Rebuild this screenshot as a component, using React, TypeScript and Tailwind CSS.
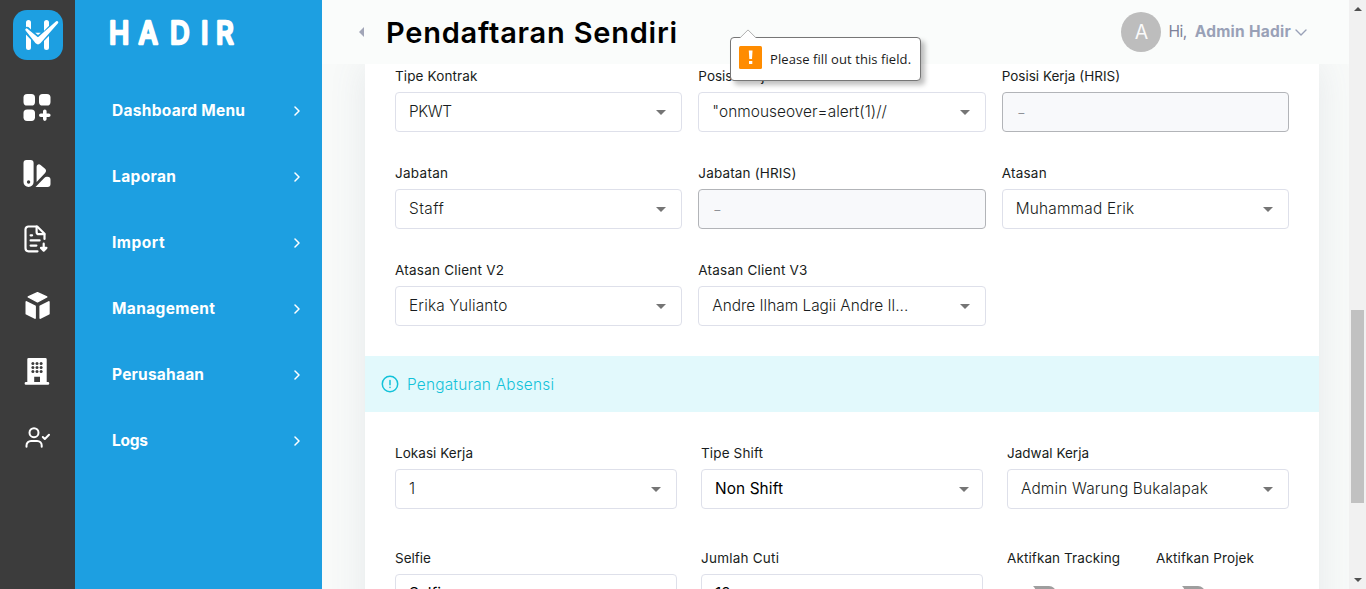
import type { ReactNode } from 'react';

type FieldProps = {
  label: string;
  labelClass?: string;
  value: string;
  valueClass?: string;
  disabled?: boolean;
  arrowClass?: string;
};

const menu = [
  { text: 'Dashboard Menu', cls: 'tracking-[0.284px]' },
  { text: 'Laporan', cls: 'tracking-[0.367px]' },
  { text: 'Import', cls: 'tracking-[0.5px]' },
  { text: 'Management', cls: 'tracking-[0.352px]' },
  { text: 'Perusahaan', cls: 'tracking-[0.212px]' },
  { text: 'Logs', cls: 'tracking-[-0.3px]' },
];

const employment: FieldProps[] = [
  { label: 'Tipe Kontrak', labelClass: 'tracking-[0.12px]', value: 'PKWT', valueClass: 'tracking-[-0.4px]' },
  { label: 'Posisi Kerja', value: '"onmouseover=alert(1)//', valueClass: 'tracking-[0.04px]' },
  { label: 'Posisi Kerja (HRIS)', value: '-', disabled: true },
  { label: 'Jabatan', labelClass: 'tracking-[0.28px]', value: 'Staff', valueClass: 'tracking-[0.45px]' },
  { label: 'Jabatan (HRIS)', labelClass: 'tracking-[0.156px]', value: '-', disabled: true },
  { label: 'Atasan', labelClass: 'tracking-[0.24px]', value: 'Muhammad Erik', valueClass: 'tracking-[0.22px]' },
  { label: 'Atasan Client V2', labelClass: 'tracking-[0.226px]', value: 'Erika Yulianto', valueClass: 'tracking-[0.15px]' },
  { label: 'Atasan Client V3', labelClass: 'tracking-[0.226px]', value: 'Andre Ilham Lagii Andre Il...', valueClass: 'tracking-[0px]' },
];

const attendance: FieldProps[] = [
  { label: 'Lokasi Kerja', labelClass: 'tracking-[0.05px]', value: '1' },
  { label: 'Tipe Shift', labelClass: 'tracking-[0.134px]', value: 'Non Shift', valueClass: 'font-normal text-black tracking-[0.1px]', arrowClass: '-mr-0.5' },
  { label: 'Jadwal Kerja', labelClass: 'tracking-[0.02px]', value: 'Admin Warung Bukalapak', valueClass: 'tracking-[0.16px]' },
];

function Label({ children, className = '' }: { children: ReactNode; className?: string }) {
  return (
    <div className={'mb-1.5 h-5 whitespace-nowrap text-[13.5px] leading-5 text-[#181c20] ' + className}>
      {children}
    </div>
  );
}

function Field({ label, labelClass, value, valueClass = '', disabled, arrowClass = '' }: FieldProps) {
  return (
    <div className="min-w-0">
      <Label className={labelClass}>{label}</Label>
      {disabled ? (
        <div className="flex h-10 items-center rounded-[4px] border border-[#b2b4b8] bg-[#f8f9fb] px-3.5 pt-px text-[15.4px] font-light text-[#8f9297]">
          <span className="inline-block origin-left scale-x-125">{value}</span>
        </div>
      ) : (
        <div className="flex h-10 items-center justify-between rounded-[4px] border border-[#dee0ea] bg-white pl-[13px] pr-[15px]">
          <span className={'whitespace-nowrap text-[15.4px] font-light text-[#181c20] ' + valueClass}>{value}</span>
          <svg width="10" height="5" viewBox="0 0 10 5" className={'mt-px shrink-0 fill-[#757575] ' + arrowClass}>
            <path d="M0 0h10L5 5z" />
          </svg>
        </div>
      )}
    </div>
  );
}

function Logo() {
  return (
    <svg width="50" height="50" viewBox="0 0 50 50" fill="none" strokeLinecap="round">
      <rect width="50" height="50" rx="14" fill="#1d9fe1" />
      <path d="M15.5 12.5v25M33.5 12.5v25" stroke="#fff" strokeWidth="5" />
      <path d="M14 20.5L25 32L44 12.7" stroke="#1d9fe1" strokeWidth="7" strokeLinejoin="round" />
      <path d="M13.600 19.700L25 29L44 12.300L26.400 32.400Q25 33.800 23.600 32.400z" fill="#fff" stroke="#fff" strokeWidth="2.600" strokeLinejoin="round" />
      <path d="M22.200 22.800h5.600l-2.800 2.200z" fill="#fff" />
    </svg>
  );
}

function RailIcon({ children }: { children: ReactNode }) {
  return (
    <div className="flex h-[66px] w-full items-center justify-center pr-px">
      <svg width="28" height="28" viewBox="0 0 28 28" fill="none" className="text-white">
        {children}
      </svg>
    </div>
  );
}

function Rail() {
  return (
    <aside className="flex w-[75px] shrink-0 flex-col items-center bg-[#3c3c3c] pt-2.5">
      <div className="mb-[14px] pl-px"><Logo /></div>
      <RailIcon>
        <g fill="currentColor">
          <rect x="0.5" y="1" width="11.500" height="11.500" rx="3.600" />
          <rect x="16" y="1" width="11.500" height="11.500" rx="3.600" />
          <rect x="0.5" y="16.400" width="11.500" height="11.500" rx="3.600" />
        </g>
        <path d="M21.800 18.300v7.800M17.800 22.200h8" stroke="currentColor" strokeWidth="3.600" strokeLinecap="round" />
      </RailIcon>
      <RailIcon>
        <g fill="currentColor" transform="translate(0 .5)">
          <path fillRule="evenodd" d="M3.600.5h4a3 3 0 0 1 3 3v18.900a5 5 0 0 1-10.100 0V3.500a3 3 0 0 1 3.100-3zM5.600 20.800a1.700 1.700 0 1 0 0 3.400 1.700 1.700 0 0 0 0-3.400z" />
          <path d="M13.600 18.800V7.400c0-2.300 2.300-3.300 4-2l4.200 3.500c1.600 1.300 1.700 3 .3 4.500l-8.500 9z" />
          <path d="M12.500 27.500l9-9.300q1-1 2.300-1h.7a3 3 0 0 1 3 3v4.300a3 3 0 0 1-3 3z" />
        </g>
      </RailIcon>
      <RailIcon>
        <g stroke="currentColor" strokeWidth="2.200" strokeLinecap="round" strokeLinejoin="round">
          <path d="M14.500 26.300H5.500a3 3 0 0 1-3-3V4.500a3 3 0 0 1 3-3h8.700L21.500 8.700v5.200" />
          <path d="M13.600 1.700v5.200a2.300 2.300 0 0 0 2.300 2.300h5.400" />
          <path d="M7.600 10.300h1.500M7.600 15.400h9M7.600 20.600h5.800" />
          <path d="M20.700 18.700v6M18 22.900l2.700 2.700 2.700-2.700z" fill="currentColor" />
        </g>
      </RailIcon>
      <RailIcon>
        <g fill="currentColor" stroke="currentColor" strokeLinejoin="round">
          <path d="M14.500 1.700l9.300 4.300-9.300 4.800L5.200 6z" strokeWidth="1.400" />
          <path d="M3.400 11l8.600 4.300V27l-8.600-4.200z" strokeWidth="1.800" />
          <path d="M25.800 11l-8.500 4.300V27l8.500-4.200z" strokeWidth="1.800" />
        </g>
      </RailIcon>
      <RailIcon>
        <path
          fill="currentColor"
          fillRule="evenodd"
          d="M4.300 2.300A1.300 1.300 0 0 1 5.600 1h16.800a1.300 1.300 0 0 1 1.300 1.300V25h1.200a1.400 1.400 0 0 1 0 2.800H3A1.400 1.400 0 0 1 3 25h1.300zM11.200 19.800V25h5.800v-5.200z"
        />
        <g fill="#3c3c3c">
          <circle cx="9.900" cy="6.500" r="1.500" /><circle cx="14" cy="6.500" r="1.500" /><circle cx="18.100" cy="6.500" r="1.500" />
          <circle cx="9.900" cy="10.500" r="1.500" /><circle cx="14" cy="10.500" r="1.500" /><circle cx="18.100" cy="10.500" r="1.500" />
          <circle cx="9.900" cy="14.500" r="1.500" /><circle cx="14" cy="14.500" r="1.500" /><circle cx="18.100" cy="14.500" r="1.500" />
        </g>
      </RailIcon>
      <RailIcon>
        <g stroke="currentColor" strokeWidth="2" strokeLinecap="round" strokeLinejoin="round" transform="translate(0 1)">
          <circle cx="11" cy="8.700" r="4.500" />
          <path d="M3.500 22.800v-1.400a4.500 4.500 0 0 1 4.500-4.500h6.200a4.500 4.500 0 0 1 4.500 4.500v1.400" />
          <path d="M19.800 13l2 2 4.200-4.300" />
        </g>
      </RailIcon>
    </aside>
  );
}

function Sidebar() {
  return (
    <nav className="flex w-[247px] shrink-0 flex-col bg-[#1d9fe1] text-white">
      <svg width="130" height="33" viewBox="0 0 130 33" className="ml-[33px] mt-4">
        <text
          transform="scale(.88 1)"
          x="1.100 34.700 70.500 105.700 122.700"
          y="28.200"
          fontFamily="Inter"
          fontSize="31"
          fontWeight="500"
          fill="#fff"
          stroke="#fff"
          strokeWidth="2.500"
          strokeLinejoin="round"
        >
          HADIR
        </text>
      </svg>
      <ul className="mt-7">
        {menu.map((m) => (
          <li key={m.text} className="flex h-[66px] items-center justify-between pl-[37px] pr-[22px] pt-0.5">
            <span className={'text-[15.5px] font-bold ' + m.cls}>{m.text}</span>
            <svg width="6" height="10" viewBox="0 0 6 10" fill="none" stroke="#fff" strokeWidth="1.500" strokeLinecap="round" strokeLinejoin="round">
              <path d="M1 1l4 4-4 4" />
            </svg>
          </li>
        ))}
      </ul>
    </nav>
  );
}

function Header() {
  return (
    <header className="relative z-10 flex h-16 shrink-0 items-center bg-[#fafcfb]">
      <svg width="6" height="10" viewBox="0 0 6 10" className="ml-9 fill-[#a1a5b7]">
        <path d="M6 0v10L1 5z" />
      </svg>
      <h1 className="ml-[22px] whitespace-nowrap pt-0.5 text-[29px] font-semibold tracking-[0.78px] text-black">Pendaftaran Sendiri</h1>
      <div className="ml-auto mr-[42px] flex items-center">
        <div className="flex size-10 items-center justify-center rounded-full bg-[#bdbdbd] pt-px text-[19.5px] text-[#fafafa]">A</div>
        <span className="ml-[7px] text-[15.5px] tracking-[-0.5px] text-[#7e8299]">Hi,</span>
        <span className="ml-2 whitespace-nowrap text-[15.5px] font-bold tracking-[0.25px] text-[#99a1b7]">Admin Hadir</span>
        <svg width="12" height="7" viewBox="0 0 12 7" fill="none" stroke="#99a1b7" strokeWidth="1.400" strokeLinecap="round" strokeLinejoin="round" className="ml-1">
          <path d="M1 1l5 5 5-5" />
        </svg>
      </div>
    </header>
  );
}

function Toggle() {
  return (
    <svg width="42" height="24" viewBox="0 0 42 24" className="ml-[14px] mt-3">
      <rect x="1" y="6" width="34" height="14" rx="7" fill="#9e9e9e" />
      <circle cx="5" cy="13" r="10" fill="#fff" />
    </svg>
  );
}

function Tooltip() {
  return (
    <div className="absolute left-[730px] top-[37px] z-20 flex h-11 w-[191px] items-center rounded-[4px] border border-[#767676] bg-white pl-2 shadow-[4px_4px_5px_rgba(0,0,0,0.25)]">
      <svg width="18" height="10" viewBox="0 0 18 10" className="absolute -top-[9px] left-2">
        <path d="M1 9l8-8 8 8v1H1z" fill="#fff" />
        <path d="M1 8.900l8-8 8 8" fill="none" stroke="#b0b0b0" />
      </svg>
      <svg width="23" height="23" viewBox="0 0 23 23" className="mb-[3px] shrink-0">
        <rect width="23" height="23" rx="1.500" fill="#ff8c00" />
        <path d="M9.800 4.500h3.700l-.5 8.500h-2.700z" fill="#fff" />
        <rect x="10" y="15" width="3.300" height="3" fill="#fff" />
      </svg>
      <span className="ml-2 whitespace-nowrap pt-px font-['Open_Sans'] text-[13px] tracking-[0.08px] text-[#1a1a1a]">Please fill out this field.</span>
    </div>
  );
}

function Scrollbar() {
  return (
    <div className="flex w-[17px] shrink-0 flex-col items-center bg-[#f1f1f1] pb-[7px] pt-[7px]">
      <svg width="8" height="4" viewBox="0 0 8 4" className="fill-[#505050]"><path d="M0 4h8L4 0z" /></svg>
      <div className="mt-[299px] h-[193px] w-[13px] bg-[#c1c1c1]" />
      <svg width="8" height="4" viewBox="0 0 8 4" className="mt-auto fill-[#505050]"><path d="M0 0h8L4 4z" /></svg>
    </div>
  );
}

export default function App() {
  return (
    <div className="relative flex h-[589px] w-[1366px] overflow-hidden font-['Inter',sans-serif]">
      <Rail />
      <Sidebar />
      <main className="flex min-w-0 flex-1 flex-col overflow-hidden bg-[#f8faf9]">
        <Header />
        <div className="ml-[43px] mr-[30px] h-[700px] shrink-0 bg-white shadow-[0_0_35px_rgba(100,110,135,0.12)]">
          <section className="grid grid-cols-3 gap-x-4 gap-y-[31px] px-[30px] pb-[30px] pt-0.5">
            {employment.map((f) => <Field key={f.label} {...f} />)}
          </section>
          <div className="flex h-14 items-center bg-[#e2f9fc] pl-4 text-[#12c2d9]">
            <svg width="18" height="18" viewBox="0 0 18 18" fill="none" stroke="currentColor" strokeWidth="1.500" strokeLinecap="round">
              <circle cx="9" cy="9" r="7.700" />
              <path d="M9 5.500v4.200M9 12.300v.3" />
            </svg>
            <span className="ml-2 pt-px text-[15.4px] font-light tracking-[0.211px]">Pengaturan Absensi</span>
          </div>
          <section className="grid grid-cols-3 gap-x-6 gap-y-[39px] px-[30px] pt-[31px]">
            {attendance.map((f) => <Field key={f.label} {...f} />)}
            <Field label="Selfie" value="Selfie" valueClass="font-normal text-black" />
            <Field label="Jumlah Cuti" labelClass="tracking-[0.23px]" value="12" valueClass="font-normal text-black" />
            <div className="flex">
              <div className="w-[149px]">
                <Label className="tracking-[0.1px]">Aktifkan Tracking</Label>
                <Toggle />
              </div>
              <div>
                <Label className="tracking-[0.12px]">Aktifkan Projek</Label>
                <Toggle />
              </div>
            </div>
          </section>
        </div>
      </main>
      <Scrollbar />
      <Tooltip />
    </div>
  );
}
